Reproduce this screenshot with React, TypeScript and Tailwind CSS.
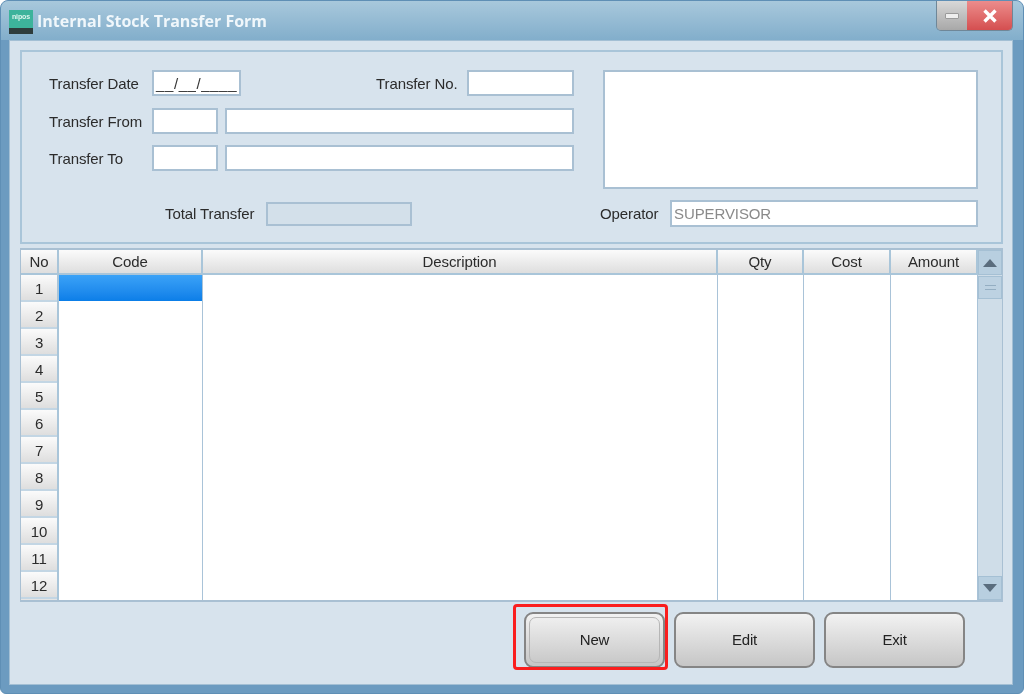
const font = { fontFamily: '"Liberation Sans", Arial, sans-serif' };
const rows = ["1", "2", "3", "4", "5", "6", "7", "8", "9", "10", "11", "12"];
const cols = [
  { name: "Code", w: "w-[144px]" },
  { name: "Description", w: "w-[515px]" },
  { name: "Qty", w: "w-[86px]" },
  { name: "Cost", w: "w-[87px]" },
  { name: "Amount", w: "w-[87px]" },
];

function Box({ className = "", children }: { className?: string; children?: React.ReactNode }) {
  return <div className={`bg-white border-2 border-[#a9c0d3] ${className}`}>{children}</div>;
}

function Btn({ label, focused = false }: { label: string; focused?: boolean }) {
  return (
    <button className="relative w-[141px] h-[56px] rounded-[9px] border-2 border-[#858585] bg-gradient-to-b from-[#f2f2f2] to-[#c6c6c6] text-[15px] tracking-[-0.2px] text-[#222]">
      {focused && <span className="absolute inset-[3px] rounded-[7px] border border-[#b6b6b6]" />}
      {label}
    </button>
  );
}

function Label({ className = "", children }: { className?: string; children: React.ReactNode }) {
  return <span className={`pt-[2px] ${className}`}>{children}</span>;
}

export default function App() {
  return (
    <div style={font} className="w-[1024px] h-[695px] bg-white overflow-hidden text-[15px] tracking-[-0.1px] text-[#2b2b2b] blur-[0.35px]">
      <div className="w-[1024px] h-[694px] rounded-t-[8px] rounded-b-[6px] border border-[#5f8fb5] bg-[#6c9bc0] flex flex-col overflow-hidden">
        <div className="h-[39px] flex items-start pl-[8px] pr-[10px] shrink-0 bg-gradient-to-b from-[#a8c8dc] to-[#82aecb]">
          <div className="mt-[9px] w-[24px] h-[24px] bg-[#3db39b] flex flex-col justify-between overflow-hidden">
            <span className="text-[7px] leading-[14px] font-bold text-[#dff5ee] text-center">nipos</span>
            <span className="h-[6px] bg-[#2e3c3c]" />
          </div>
          <div style={{ fontFamily: '"Open Sans", sans-serif' }} className="ml-[4px] mt-[10px] font-bold text-[16px] tracking-normal leading-[20px] text-[#f0f7fb]">
            Internal Stock Transfer Form
          </div>
          <div className="ml-auto flex h-[30px] rounded-b-[5px] overflow-hidden border border-t-0 border-[#6f8798]">
            <div className="w-[30px] bg-gradient-to-b from-[#d8d8d8] to-[#a8a8a8] flex items-center justify-center">
              <div className="w-[14px] h-[6px] bg-[#eeeeee] border border-[#9a9a9a] rounded-[1px]" />
            </div>
            <div className="w-[45px] bg-gradient-to-b from-[#ec8c8c] to-[#d44e50] flex items-center justify-center">
              <svg width="16" height="14" viewBox="0 0 16 14">
                <path d="M2.5 1.5 L13.5 12.5 M13.5 1.5 L2.5 12.5" stroke="#fff" strokeWidth="3.4" />
              </svg>
            </div>
          </div>
        </div>
        <div className="ml-[8px] mr-[10px] h-[645px] bg-[#d7e3ed] border border-[#a3bfd4] pl-[10px] pr-[9px] pt-[9px] flex flex-col">
          <div className="h-[194px] border-2 border-[#a9c5d9] pl-[27px] pr-[23px] pt-[18px] shrink-0">
            <div className="flex h-[118px]">
              <div className="w-[525px] flex flex-col shrink-0">
                <div className="flex items-center h-[26px]">
                  <Label className="w-[103px]">Transfer Date</Label>
                  <Box className="w-[89px] h-[26px] flex items-center pl-[2px] text-[#333] leading-none tracking-[0.6px]">__/__/____</Box>
                  <Label className="ml-[135px] w-[91px]">Transfer No.</Label>
                  <Box className="w-[107px] h-[26px]" />
                </div>
                <div className="flex items-center h-[26px] mt-[12px]">
                  <Label className="w-[103px]">Transfer From</Label>
                  <Box className="w-[66px] h-[26px]" />
                  <Box className="w-[349px] h-[26px] ml-[7px]" />
                </div>
                <div className="flex items-center h-[26px] mt-[11px]">
                  <Label className="w-[103px]">Transfer To</Label>
                  <Box className="w-[66px] h-[26px]" />
                  <Box className="w-[349px] h-[26px] ml-[7px]" />
                </div>
              </div>
              <Box className="ml-[29px] w-[375px] h-[119px]" />
            </div>
            <div className="flex items-center h-[27px] mt-[12px]">
              <Label className="ml-[116px] w-[101px]">Total Transfer</Label>
              <div className="w-[146px] h-[24px] border-2 border-[#a9c0d3] bg-[#d3e0ea]" />
              <Label className="ml-[188px] w-[70px]">Operator</Label>
              <Box className="w-[308px] h-[27px] flex items-center pl-[2px] pt-[1px] text-[#8a8a8a]">SUPERVISOR</Box>
            </div>
          </div>
          <div className="mt-[4px] h-[354px] flex border-2 border-[#a9c0d3] border-l-[1px] border-r-[1px] bg-white shrink-0 overflow-hidden">
            <div className="w-[957px] flex flex-col shrink-0">
              <div className="h-[25px] flex shrink-0">
                <div className="w-[38px] pt-[1px] border-r-2 border-b-2 border-[#a9c5d9] bg-gradient-to-b from-[#fbfbfb] to-[#dedede] flex items-center justify-center">No</div>
                {cols.map((c) => (
                  <div key={c.name} className={`${c.w} pt-[1px] border-r-2 border-b-2 border-[#a9c5d9] bg-gradient-to-b from-[#fbfbfb] to-[#dedede] flex items-center justify-center`}>
                    {c.name}
                  </div>
                ))}
              </div>
              <div className="flex flex-1 min-h-0">
                <div className="w-[38px] flex flex-col bg-[#e4e4e4] border-r-2 border-[#a9c5d9] shrink-0">
                  {rows.map((r) => (
                    <div key={r} className="h-[27px] shrink-0 border-b-2 border-[#c3d6e4] bg-gradient-to-b from-[#fbfbfb] to-[#dedede] flex items-center justify-center pt-[4px]">
                      {r}
                    </div>
                  ))}
                </div>
                {cols.map((c, i) => (
                  <div key={c.name} className={`${c.w} border-r border-[#a9c3d8]`}>
                    {i === 0 && <div className="h-[26px] bg-gradient-to-b from-[#3aa2f7] to-[#0a7ee8]" />}
                  </div>
                ))}
              </div>
            </div>
            <div className="w-[24px] bg-[#cfdde8] flex flex-col">
              <div className="h-[25px] bg-[#b8cfe0] border border-[#a5c0d4] flex items-center justify-center">
                <svg width="14" height="8" viewBox="0 0 14 8"><path d="M7 0 L14 8 L0 8 Z" fill="#5a6d7e" /></svg>
              </div>
              <div className="h-[23px] mt-[1px] bg-[#bdd2e2] border border-[#a5c0d4] flex flex-col items-center justify-center gap-[3px]">
                <div className="w-[11px] h-[1px] bg-[#94aec2]" />
                <div className="w-[11px] h-[1px] bg-[#94aec2]" />
              </div>
              <div className="flex-1" />
              <div className="h-[24px] bg-[#b8cfe0] border border-[#a5c0d4] flex items-center justify-center">
                <svg width="14" height="8" viewBox="0 0 14 8"><path d="M0 0 L14 0 L7 8 Z" fill="#5a6d7e" /></svg>
              </div>
            </div>
          </div>
          <div className="flex justify-end gap-[9px] mt-[10px] pr-[38px]">
            <div className="relative">
              <Btn label="New" focused />
              <div className="absolute left-[-11px] top-[-8px] w-[155px] h-[66px] border-[3px] border-[#fa1e1e] rounded-[4px] pointer-events-none" />
            </div>
            <Btn label="Edit" />
            <Btn label="Exit" />
          </div>
        </div>
      </div>
    </div>
  );
}
